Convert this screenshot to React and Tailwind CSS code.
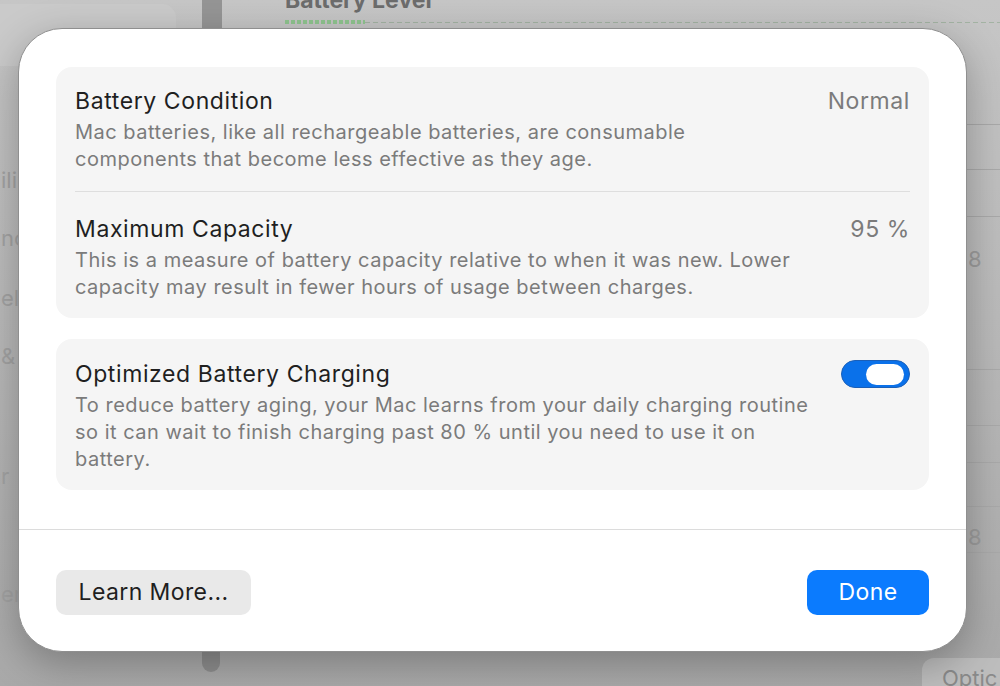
import React from 'react';

// Backdrop: the dimmed settings window behind the sheet
const Backdrop = () => {
    const sideItems = [
        { t: 'ili', y: 'mt-[100px]' },
        { t: 'nc', y: 'mt-[30px]' },
        { t: 'el', y: 'mt-[32px]' },
        { t: '&', y: 'mt-[30px]' },
        { t: 'r', y: 'mt-[92px]' },
        { t: 'er', y: 'mt-[90px]' },
    ];
    const gridLines = ['mt-[100px]', 'mt-[44px]', 'mt-[46px]', 'mt-[152px]', 'mt-[55px]', 'mt-[36px]', 'mt-[43px]', 'mt-[45px]'];

    return (
        <div className="flex h-full bg-gradient-to-b from-[#c6c6c6] via-[#b9b9b9] to-[#a9a9a9]">
            {/* Sidebar */}
            <aside className="w-[202px] flex flex-col">
                <div className="w-[176px] h-[62px] mt-[4px] rounded-r-[14px] bg-[#cacaca]" />
                <div className="flex flex-col text-[22px] leading-[28px] text-[#a3a3a3]">
                    {sideItems.map((s, i) => (
                        <span key={i} className={`${s.y} pl-[1px] whitespace-nowrap`}>{s.t}</span>
                    ))}
                </div>
            </aside>

            {/* Scrollbar */}
            <div className="w-[20px] flex flex-col justify-between">
                <div className="h-[40px] bg-[#959595]" />
                <div className="w-[18px] h-[34px] mb-[14px] rounded-b-full bg-[#8e8e8e]" />
            </div>

            {/* Content */}
            <main className="flex-1 relative flex flex-col pl-[63px]">
                <h2 className="-mt-[14px] text-[23px] leading-[28px] font-bold text-[#6c6c6c]">Battery Level</h2>
                <div className="mt-[6px] flex items-center h-[4px]">
                    <div className="w-[80px] h-[4px] bg-[repeating-linear-gradient(90deg,#8fc48f_0_4px,transparent_4px_6px)]" />
                    <div className="flex-1 h-[1px] bg-[repeating-linear-gradient(90deg,#a3b3a3_0_5px,transparent_5px_8px)]" />
                </div>
                <div className="flex-1 flex justify-end">
                    <div className="w-[33px] flex flex-col">
                        {gridLines.map((m, i) => (
                            <div key={i} className={`${m} h-[1px] bg-[#a9a9a9]`} />
                        ))}
                    </div>
                </div>
                <div className="absolute right-0 top-[243px] text-[22px] text-[#9c9c9c] w-[32px]">8</div>
                <div className="absolute right-0 top-[521px] text-[22px] text-[#9c9c9c] w-[32px]">8</div>
                <div className="absolute right-0 bottom-0 w-[78px] h-[28px] rounded-tl-[12px] bg-[#bdbdbd] pl-[20px] text-[22px] leading-[40px] text-[#8a8a8a] overflow-hidden">Optic</div>
            </main>
        </div>
    );
};

const Toggle = () => (
    <div className="w-[69px] h-[28px] rounded-full bg-[#0a71ea] border border-[#1a5fb8] flex items-center justify-end pr-[5px]">
        <div className="w-[38px] h-[21px] rounded-full bg-white" />
    </div>
);

const Row = ({ title, value, children, className }) => (
    <div className={`flex items-start justify-between ${className}`}>
        <div className="flex-1">
            <div className="text-[23px] leading-[28px] tracking-[0.6px] text-[#1f1f1f]">{title}</div>
            <div className="mt-[4px] text-[20px] leading-[27px] tracking-[0.5px] text-[#7b7b7b]">{children}</div>
        </div>
        {value}
    </div>
);

export default function App() {
    return (
        <div className="relative w-[1000px] h-[686px] overflow-hidden font-['Inter','Liberation_Sans',sans-serif]">
            <Backdrop />

            {/* Sheet */}
            <div className="absolute left-[18px] top-[28px] w-[949px] h-[624px] rounded-[44px] bg-white border border-[#8f8f8f] shadow-[0_12px_40px_rgba(0,0,0,0.28)] flex flex-col">
                <div className="px-[37px] pt-[38px] flex flex-col gap-[21px]">
                    <div className="rounded-[16px] bg-[#f5f5f5] px-[19px]">
                        <Row
                            className="pt-[20px] pb-[18px]"
                            title="Battery Condition"
                            value={<span className="text-[23px] leading-[28px] tracking-[0.6px] text-[#7b7b7b]">Normal</span>}
                        >
                            Mac batteries, like all rechargeable batteries, are consumable<br />
                            components that become less effective as they age.
                        </Row>
                        <div className="h-px bg-[#dedede]" />
                        <Row
                            className="pt-[23px] pb-[17px]"
                            title="Maximum Capacity"
                            value={<span className="text-[23px] leading-[28px] tracking-[0.6px] text-[#7b7b7b]">95 %</span>}
                        >
                            This is a measure of battery capacity relative to when it was new. Lower<br />
                            capacity may result in fewer hours of usage between charges.
                        </Row>
                    </div>

                    <div className="rounded-[16px] bg-[#f5f5f5] px-[19px]">
                        <Row
                            className="pt-[21px] pb-[17px]"
                            title="Optimized Battery Charging"
                            value={<Toggle />}
                        >
                            To reduce battery aging, your Mac learns from your daily charging routine<br />
                            so it can wait to finish charging past 80 % until you need to use it on<br />
                            battery.
                        </Row>
                    </div>
                </div>

                <div className="mt-[39px] h-px bg-[#dcdcdc]" />

                <div className="flex justify-between px-[37px] pt-[40px]">
                    <button className="w-[195px] h-[45px] rounded-[10px] bg-[#e9e9e9] text-[23px] tracking-[0.4px] text-[#1f1f1f]">Learn More...</button>
                    <button className="w-[122px] h-[45px] rounded-[10px] bg-[#0b7bfe] text-[23px] tracking-[0.4px] text-white">Done</button>
                </div>
            </div>
        </div>
    );
}
